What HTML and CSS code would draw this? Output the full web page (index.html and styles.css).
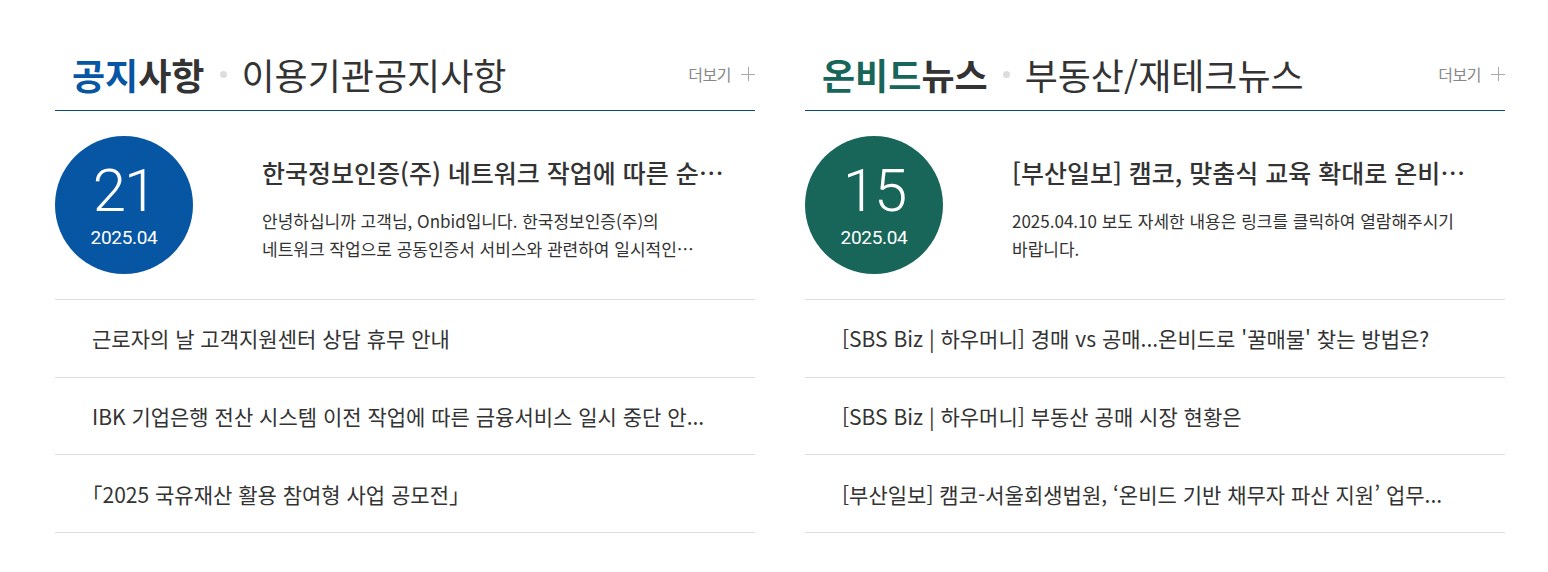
FILE: index.html
```html
<!DOCTYPE html>
<html lang="ko">
<head>
<meta charset="utf-8">
<title>공지사항 / 온비드뉴스</title>
<link rel="stylesheet" href="styles.css">
</head>
<body>
<div class="wrap">
  <section class="panel panel-notice">
    <div class="panel-head">
      <h2 class="panel-title"><span class="accent">공지</span>사항</h2>
      <span class="dot"></span>
      <span class="panel-sub">이용기관공지사항</span>
      <a class="more" href="#">더보기 <span class="plus"></span></a>
    </div>
    <div class="feature">
      <div class="date-circle">
        <span class="day">21</span>
        <span class="ym">2025.04</span>
      </div>
      <div class="feature-body">
        <p class="feature-title">한국정보인증(주) 네트워크 작업에 따른 순…</p>
        <p class="feature-desc"><span class="ln">안녕하십니까 고객님, Onbid입니다. 한국정보인증(주)의</span><span class="ln">네트워크 작업으로 공동인증서 서비스와 관련하여 일시적인…</span></p>
      </div>
    </div>
    <ul class="list">
      <li>근로자의 날 고객지원센터 상담 휴무 안내</li>
      <li>IBK 기업은행 전산 시스템 이전 작업에 따른 금융서비스 일시 중단 안...</li>
      <li><span class="open-br">「</span>2025 국유재산 활용 참여형 사업 공모전」</li>
    </ul>
  </section>
  <section class="panel panel-news">
    <div class="panel-head">
      <h2 class="panel-title"><span class="accent">온비드</span>뉴스</h2>
      <span class="dot"></span>
      <span class="panel-sub">부동산/재테크뉴스</span>
      <a class="more" href="#">더보기 <span class="plus"></span></a>
    </div>
    <div class="feature">
      <div class="date-circle">
        <span class="day">15</span>
        <span class="ym">2025.04</span>
      </div>
      <div class="feature-body">
        <p class="feature-title">[부산일보] 캠코, 맞춤식 교육 확대로 온비…</p>
        <p class="feature-desc"><span class="ln">2025.04.10 보도 자세한 내용은 링크를 클릭하여 열람해주시기</span><span class="ln">바랍니다.</span></p>
      </div>
    </div>
    <ul class="list">
      <li>[SBS Biz | 하우머니] 경매 vs 공매...온비드로 '꿀매물' 찾는 방법은?</li>
      <li>[SBS Biz | 하우머니] 부동산 공매 시장 현황은</li>
      <li>[부산일보] 캠코-서울회생법원, ‘온비드 기반 채무자 파산 지원’ 업무...</li>
    </ul>
  </section>
</div>
</body>
</html>
```
FILE: styles.css
```css
* { box-sizing: border-box; }
html, body { margin: 0; padding: 0; background: #fff; }
body {
  font-family: "Noto Sans CJK KR", "Noto Sans", sans-serif;
  color: #333;
}
.wrap {
  display: flex;
  gap: 50px;
  padding: 53px 0 0 55px;
}
.panel { width: 700px; }
.panel-head {
  display: flex;
  align-items: center;
  padding: 0 0 15px 17px;
  border-bottom: 1px solid #0b4a8a;
  height: 58px;
}
.panel-title {
  margin: 0;
  font-size: 36px;
  font-weight: 700;
  line-height: 42px;
  color: #333;
}
.panel-notice .accent { color: #0656a3; }
.panel-news .accent { color: #18665a; }
.dot {
  width: 7px;
  height: 7px;
  border-radius: 50%;
  background: #ddd;
  margin: 0 15px;
}
.panel-sub {
  font-size: 36px;
  line-height: 42px;
  font-weight: 400;
  color: #333;
}
.more {
  margin-left: auto;
  display: flex;
  align-items: center;
  font-size: 16px;
  color: #888;
  text-decoration: none;
  letter-spacing: -0.5px;
}
.plus {
  position: relative;
  width: 14px;
  height: 14px;
  margin-left: 10px;
}
.plus::before, .plus::after {
  content: "";
  position: absolute;
  background: #aaa;
}
.plus::before { left: 0; right: 0; top: 7px; height: 1px; }
.plus::after { top: 0; bottom: 0; left: 7px; width: 1px; }

.feature {
  display: flex;
  padding: 25px 0;
  border-bottom: 1px solid #ddd;
}
.date-circle {
  flex: none;
  width: 138px;
  height: 138px;
  padding-bottom: 1px;
  border-radius: 50%;
  display: flex;
  flex-direction: column;
  align-items: center;
  justify-content: center;
  color: #fff;
  font-family: Roboto, "Noto Sans", sans-serif;
}
.panel-notice .date-circle { background: #0656a3; }
.panel-news .date-circle { background: #18665a; }
.day {
  font-size: 60px;
  font-weight: 300;
  line-height: 60px;
  letter-spacing: -2px;
}
.ym {
  margin-top: 6px;
  font-size: 19px;
  line-height: 22px;
  letter-spacing: -0.3px;
}
.feature-body {
  margin-left: 69px;
  padding-top: 20px;
  min-width: 0;
}
.feature-title {
  margin: 0;
  font-size: 25px;
  font-weight: 500;
  line-height: 32px;
  white-space: nowrap;
}
.feature-desc {
  margin: 19px 0 0;
  font-size: 17px;
  line-height: 28px;
}
.ln { display: block; white-space: nowrap; }

.list {
  list-style: none;
  margin: 0;
  padding: 0;
}
.list li {
  height: 77.67px;
  display: flex;
  align-items: center;
  padding-left: 37px;
  border-bottom: 1px solid #ddd;
  font-size: 21px;
  white-space: nowrap;
}
.open-br { font-feature-settings: "halt"; }
```
